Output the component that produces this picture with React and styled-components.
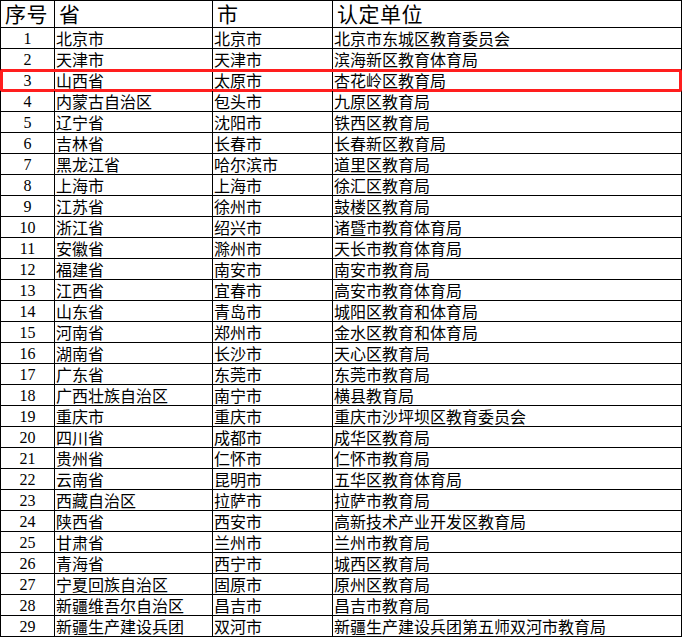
import React from "react";
import styled, { createGlobalStyle, css } from "styled-components";

const GlobalStyle = createGlobalStyle`
  html, body {
    margin: 0;
    padding: 0;
    background: #ffffff;
  }
`;

const rows = [
  ["北京市", "北京市", "北京市东城区教育委员会"],
  ["天津市", "天津市", "滨海新区教育体育局"],
  ["山西省", "太原市", "杏花岭区教育局"],
  ["内蒙古自治区", "包头市", "九原区教育局"],
  ["辽宁省", "沈阳市", "铁西区教育局"],
  ["吉林省", "长春市", "长春新区教育局"],
  ["黑龙江省", "哈尔滨市", "道里区教育局"],
  ["上海市", "上海市", "徐汇区教育局"],
  ["江苏省", "徐州市", "鼓楼区教育局"],
  ["浙江省", "绍兴市", "诸暨市教育体育局"],
  ["安徽省", "滁州市", "天长市教育体育局"],
  ["福建省", "南安市", "南安市教育局"],
  ["江西省", "宜春市", "高安市教育体育局"],
  ["山东省", "青岛市", "城阳区教育和体育局"],
  ["河南省", "郑州市", "金水区教育和体育局"],
  ["湖南省", "长沙市", "天心区教育局"],
  ["广东省", "东莞市", "东莞市教育局"],
  ["广西壮族自治区", "南宁市", "横县教育局"],
  ["重庆市", "重庆市", "重庆市沙坪坝区教育委员会"],
  ["四川省", "成都市", "成华区教育局"],
  ["贵州省", "仁怀市", "仁怀市教育局"],
  ["云南省", "昆明市", "五华区教育体育局"],
  ["西藏自治区", "拉萨市", "拉萨市教育局"],
  ["陕西省", "西安市", "高新技术产业开发区教育局"],
  ["甘肃省", "兰州市", "兰州市教育局"],
  ["青海省", "西宁市", "城西区教育局"],
  ["宁夏回族自治区", "固原市", "原州区教育局"],
  ["新疆维吾尔自治区", "昌吉市", "昌吉市教育局"],
  ["新疆生产建设兵团", "双河市", "新疆生产建设兵团第五师双河市教育局"]
];

const HIGHLIGHT_ROW = 3;

const Table = styled.div`
  width: 682px;
  box-sizing: border-box;
  border-top: 1px solid #000;
  border-right: 1px solid #000;
  color: #000;
`;

const Row = styled.div`
  display: grid;
  grid-template-columns: 54px 158px 120px 349px;
  height: ${(p) => (p.header ? "27px" : "21px")};
  box-sizing: border-box;
  border-bottom: 1px solid #000;
  position: relative;

  ${(p) =>
    p.highlighted &&
    css`
      &::after {
        content: "";
        position: absolute;
        left: 0;
        top: -1px;
        width: 682px;
        height: 23px;
        box-sizing: border-box;
        border: 3px solid #ff1e1e;
        border-radius: 2px;
        pointer-events: none;
      }
    `}
`;

const HeadCell = styled.div`
  border-left: 1px solid #000;
  padding-left: 4px;
  font-family: "Noto Sans CJK SC", sans-serif;
  font-size: 21px;
  line-height: 25px;
  letter-spacing: 0.5px;
  white-space: nowrap;
`;

const Cell = styled.div`
  border-left: 1px solid #000;
  display: flex;
  align-items: flex-end;
  justify-content: ${(p) => (p.center ? "center" : "flex-start")};
  padding: 0 0 0 ${(p) => (p.center ? "0" : "1px")};
  font-family: ${(p) =>
    p.center
      ? `"Liberation Serif", serif`
      : `"Noto Sans CJK SC", sans-serif`};
  font-size: 16px;
  line-height: ${(p) => (p.center ? "18px" : "19px")};
  white-space: nowrap;
`;

export default function App() {
  return (
    <>
      <GlobalStyle />
      <Table>
        <Row header>
          <HeadCell>序号</HeadCell>
          <HeadCell>省</HeadCell>
          <HeadCell>市</HeadCell>
          <HeadCell>认定单位</HeadCell>
        </Row>
        {rows.map(([province, city, unit], i) => (
          <Row key={i} highlighted={i + 1 === HIGHLIGHT_ROW}>
            <Cell center>{i + 1}</Cell>
            <Cell>{province}</Cell>
            <Cell>{city}</Cell>
            <Cell>{unit}</Cell>
          </Row>
        ))}
      </Table>
    </>
  );
}
